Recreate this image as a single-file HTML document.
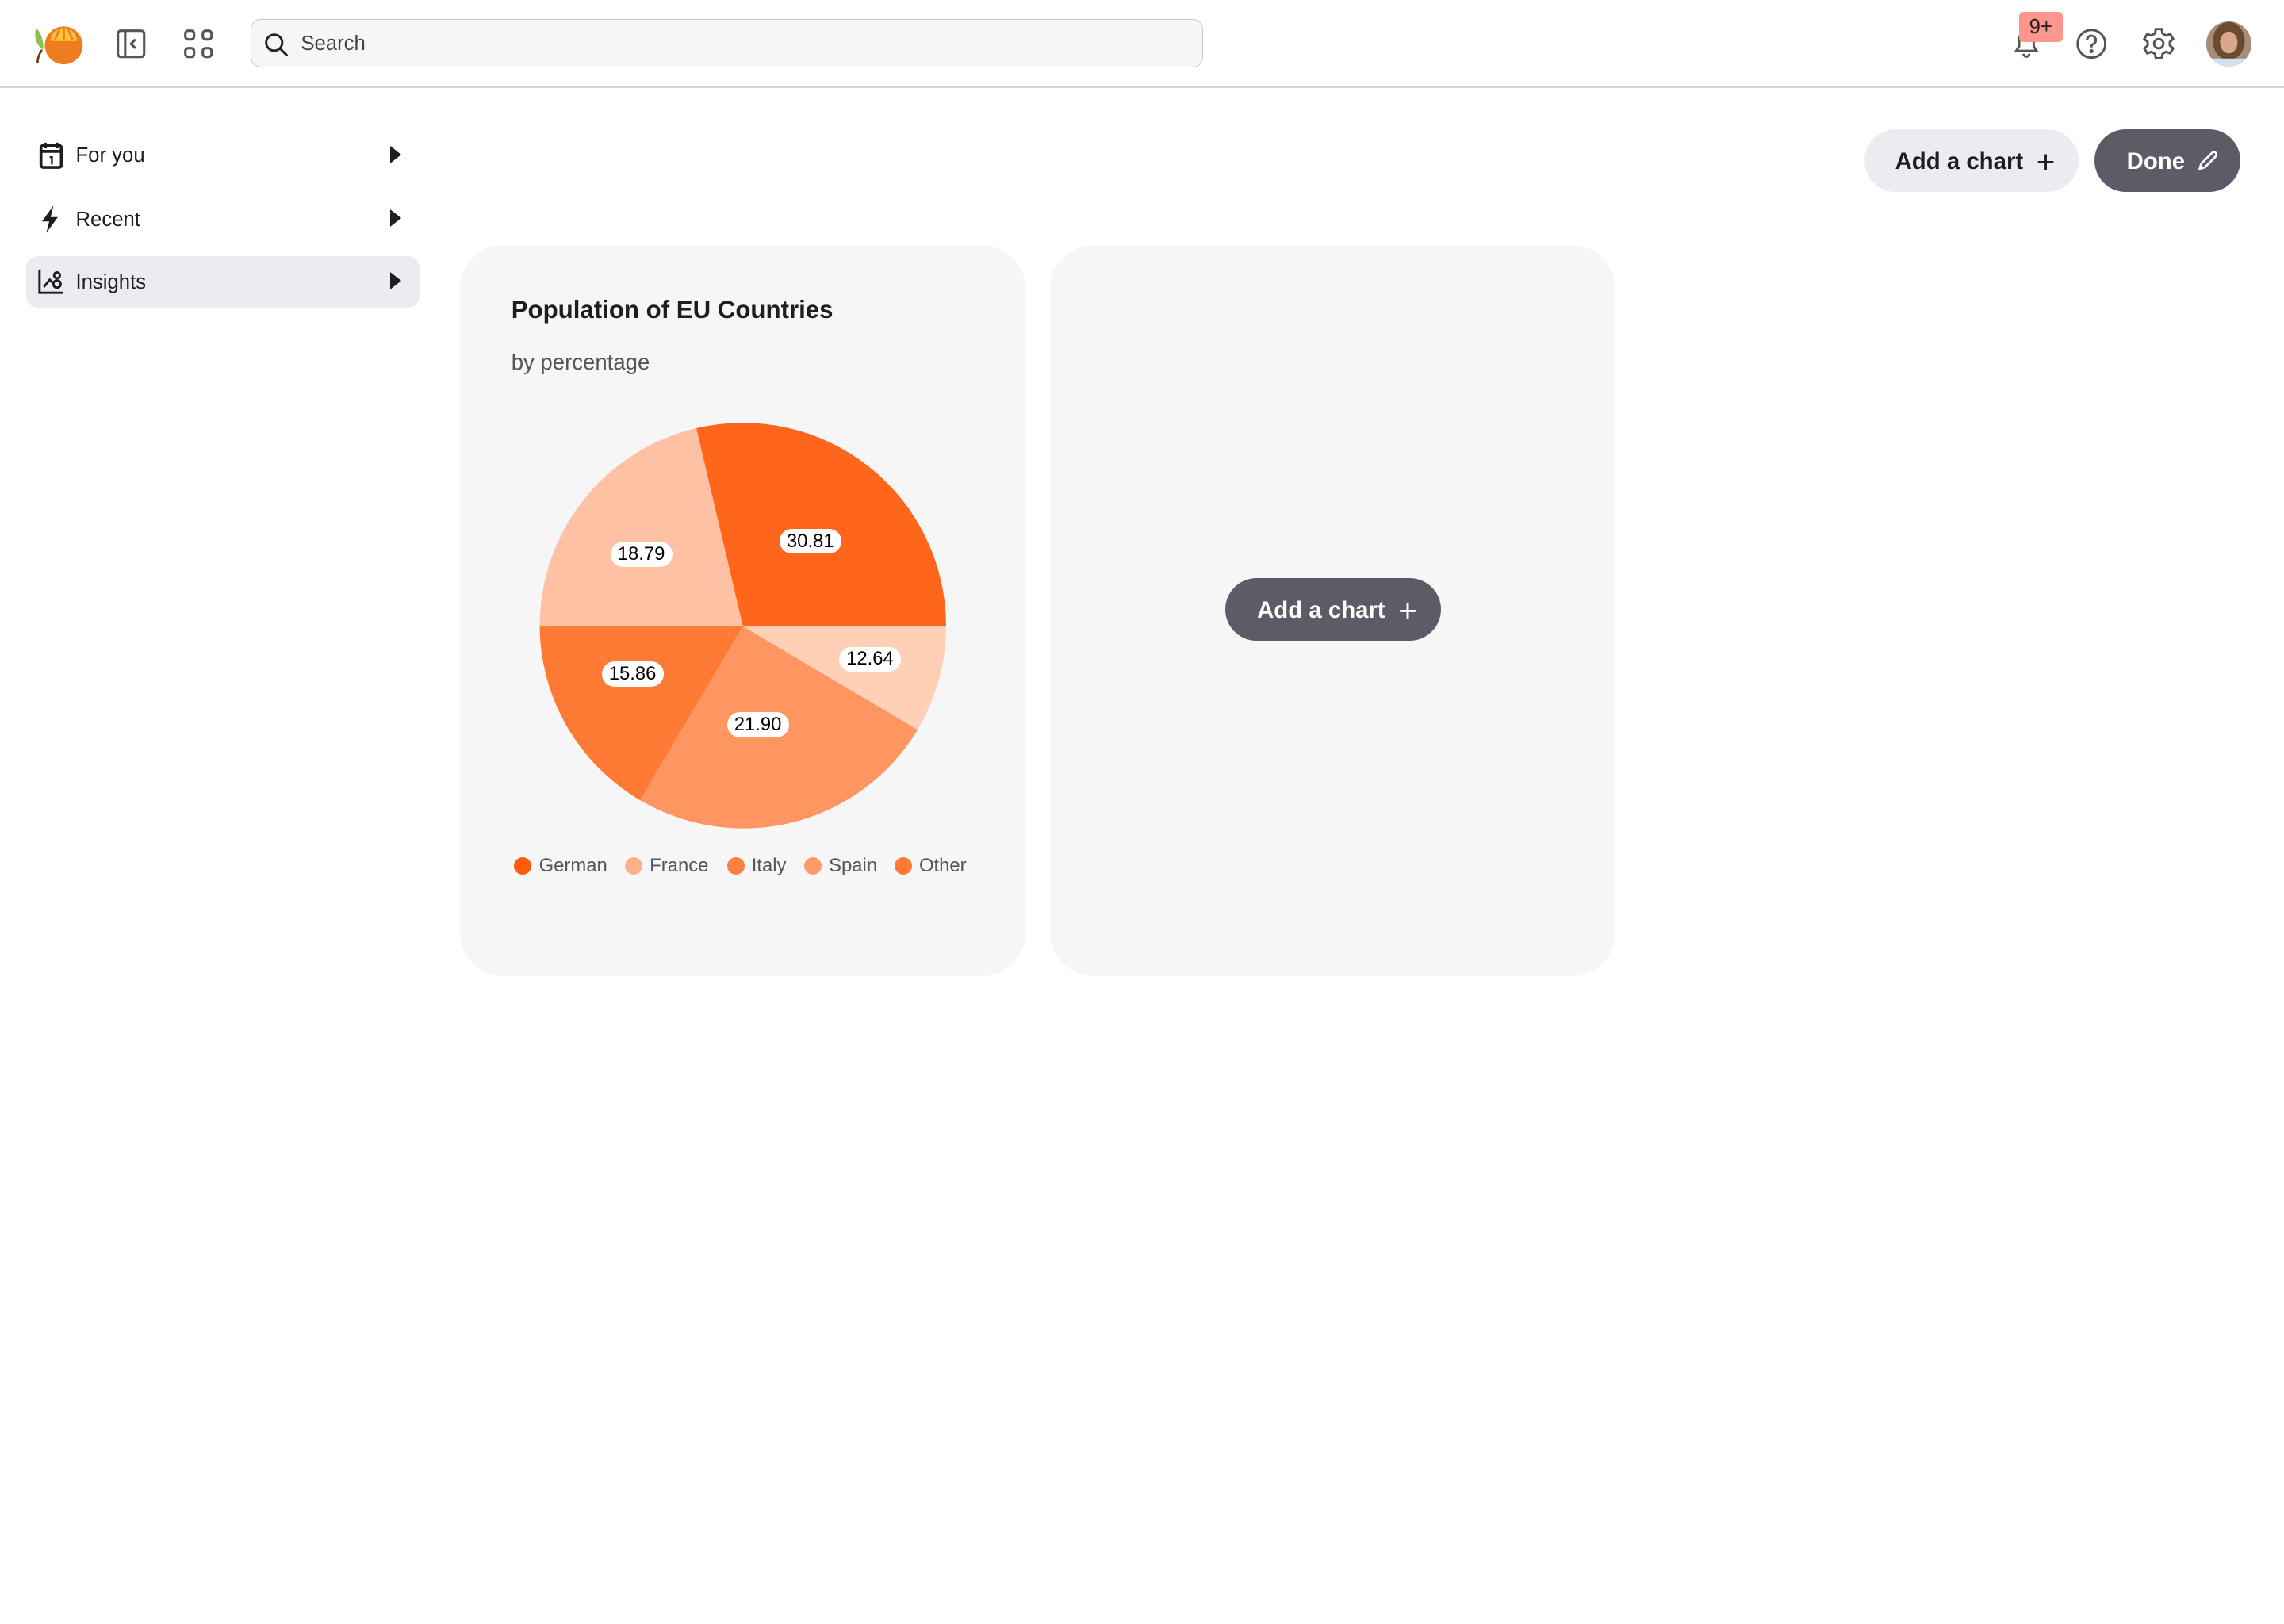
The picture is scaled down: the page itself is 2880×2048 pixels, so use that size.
<!DOCTYPE html>
<html><head><meta charset="utf-8"><style>
html,body{margin:0;padding:0;background:#fff;}
body{width:1568px;height:1115px;zoom:1.83673;position:relative;overflow:hidden;font-family:"Liberation Sans",sans-serif;color:#1d1d22;}
.a{position:absolute;}
.top{left:0;top:0;width:1568px;height:59px;border-bottom:2px solid #d6d6d6;}
.search{left:172px;top:13px;width:653px;height:32px;border:1px solid #c9c9c9;border-radius:7px;background:#f6f6f6;}
.search span{position:absolute;left:34px;top:9px;font-size:14px;color:#444;}
.nav{left:18px;width:270px;height:35px;border-radius:8px;font-size:14px;}
.nav span{position:absolute;left:34px;top:10px;}
.nav .arr{position:absolute;left:250px;top:11px;width:0;height:0;border-left:8px solid #1d1d22;border-top:6px solid transparent;border-bottom:6px solid transparent;}
.btn{height:43px;border-radius:22px;font-weight:bold;font-size:16px;line-height:45px;}
.card{top:168px;width:388px;height:502px;border-radius:30px;background:#f6f6f6;}
.pill{position:absolute;background:#fff;border-radius:9px;font-size:13px;padding:1px 5px;color:#000;}
.leg{position:absolute;top:587px;font-size:13px;color:#555560;}
.leg i{display:inline-block;width:12px;height:12px;border-radius:6px;vertical-align:-2px;margin-right:5px;}
</style></head><body>
<div class="a top"></div>
<svg class="a" style="left:22px;top:14px" width="38" height="32" viewBox="0 0 38 32">
<path d="M3 5 C1 12 4 18 8 20 C8 14 7 9 3 5Z" fill="#8bc34a"/>
<path d="M7 20 C5 23 4 26 4 29" stroke="#6b3e1e" stroke-width="1.5" fill="none"/>
<circle cx="22" cy="17" r="13" fill="#ee7d22"/>
<path d="M13 14 A9 9 0 0 1 31 14Z" fill="#ffc23a"/>
<path d="M16 13 L19 6 M22 13 L22 5 M28 13 L25 6" stroke="#ee7d22" stroke-width="1.5"/>
</svg>
<svg class="a" style="left:79px;top:19px" width="22" height="22" viewBox="0 0 22 22" fill="none" stroke="#555" stroke-width="1.7"><rect x="2" y="2" width="18" height="18" rx="2"/><path d="M7 2v18M14 8l-3 3 3 3"/></svg>
<svg class="a" style="left:125px;top:19px" width="22" height="22" viewBox="0 0 22 22" fill="none" stroke="#555" stroke-width="1.7"><rect x="2" y="2" width="6" height="6" rx="2"/><rect x="14" y="2" width="6" height="6" rx="2"/><rect x="2" y="14" width="6" height="6" rx="2"/><rect x="14" y="14" width="6" height="6" rx="2"/></svg>
<div class="a search"><svg style="position:absolute;left:8px;top:8px" width="18" height="18" viewBox="0 0 18 18" fill="none" stroke="#222" stroke-width="1.6"><circle cx="7.5" cy="7.5" r="5.5"/><path d="M11.5 11.5l5 5"/></svg><span>Search</span></div>
<svg class="a" style="left:1380px;top:17px" width="22" height="24" viewBox="0 0 22 24" fill="none" stroke="#555" stroke-width="1.6"><path d="M4 18h14l-2-3V10a5 5 0 0 0-10 0v5z"/><path d="M9 20a2 2 0 0 0 4 0"/></svg>
<div class="a" style="left:1386px;top:8px;width:30px;height:21px;background:#ff968e;border-radius:3px;font-size:14px;text-align:center;line-height:21px;color:#222">9+</div>
<svg class="a" style="left:1425px;top:19px" width="22" height="22" viewBox="0 0 22 22" fill="none" stroke="#555" stroke-width="1.6"><circle cx="11" cy="11" r="9.5"/><path d="M8 8.5a3 3 0 1 1 4 2.8c-1 .4-1 1-1 2.2"/><circle cx="11" cy="16" r=".6" fill="#555"/></svg>
<svg class="a" style="left:1470px;top:18px" width="24" height="24" viewBox="0 0 24 24" fill="none" stroke="#555" stroke-width="1.6"><path d="M10 2h4l.6 3 2.4 1.4 2.9-1 2 3.4-2.3 2v2.4l2.3 2-2 3.4-2.9-1L14.6 19l-.6 3h-4l-.6-3L7 17.6l-2.9 1-2-3.4 2.3-2v-2.4l-2.3-2 2-3.4 2.9 1L9.4 5z"/><circle cx="12" cy="12" r="3.2"/></svg>
<svg class="a" style="left:1514px;top:14px" width="32" height="32" viewBox="0 0 32 32"><defs><clipPath id="c"><circle cx="16" cy="16" r="15.5"/></clipPath></defs><g clip-path="url(#c)"><rect width="32" height="32" fill="#a88c78"/><ellipse cx="16" cy="14" rx="11" ry="13" fill="#6b4a32"/><ellipse cx="16" cy="15" rx="6" ry="7.5" fill="#d9a78c"/><rect x="4" y="26" width="24" height="8" fill="#cfe1ea"/></g></svg>

<div class="a nav" style="top:89px"><svg style="position:absolute;left:8px;top:8px" width="18" height="19" viewBox="0 0 18 19" fill="none" stroke="#1d1d22" stroke-width="2"><rect x="2" y="3" width="14" height="15" rx="1.5"/><path d="M5 1v4M13 1v4M2 7h14"/><path d="M8 11h1.5v5" stroke-width="1.3"/></svg><span>For you</span><div class="arr"></div></div>
<div class="a nav" style="top:133px"><svg style="position:absolute;left:10px;top:8px" width="14" height="19" viewBox="0 0 14 19"><path d="M9 0L1 11h5l-2 8 8-11H7z" fill="#1d1d22"/></svg><span>Recent</span><div class="arr"></div></div>
<div class="a nav" style="top:176px;background:#ececf0"><svg style="position:absolute;left:8px;top:8px" width="18" height="18" viewBox="0 0 18 18" fill="none" stroke="#1d1d22" stroke-width="1.6"><path d="M1 1v16h16"/><path d="M4 13l4-5 3 3"/><circle cx="13" cy="5" r="2"/><circle cx="13" cy="11" r="2.5"/></svg><span>Insights</span><div class="arr"></div></div>

<div class="a btn" style="left:1280px;top:89px;width:147px;background:#ececf0;color:#1d1d22"><span style="position:absolute;left:21px">Add a chart</span><span style="position:absolute;left:118px;font-size:22px;font-weight:normal">+</span></div>
<div class="a btn" style="left:1438px;top:89px;width:100px;background:#5c5c66;color:#fff"><span style="position:absolute;left:22px">Done</span><svg style="position:absolute;left:70px;top:14px" width="15" height="15" viewBox="0 0 15 15" fill="none" stroke="#fff" stroke-width="1.5"><path d="M2 13l1-3.5L10.5 2a1.5 1.5 0 0 1 2.5 2.5L5.5 12z"/></svg></div>

<div class="a card" style="left:316px">
<div class="a" style="left:35px;top:35px;font-size:17px;font-weight:bold">Population of EU Countries</div>
<div class="a" style="left:35px;top:72px;font-size:15px;color:#555">by percentage</div>
</div>
<svg class="a" style="left:0;top:0" width="1568" height="700">
<path d="M510 430 L649.5 430 A139.5 139.5 0 0 0 478 294 Z" fill="#ff661c"/>
<path d="M510 430 L478 294 A139.5 139.5 0 0 0 370.5 430 Z" fill="#fec1a3"/>
<path d="M510 430 L370.5 430 A139.5 139.5 0 0 0 439.5 549.4 Z" fill="#ff7a35"/>
<path d="M510 430 L439.5 549.4 A139.5 139.5 0 0 0 630 501 Z" fill="#ff9560"/>
<path d="M510 430 L630 501 A139.5 139.5 0 0 0 649.5 430 Z" fill="#ffcfb6"/>
</svg>
<div class="pill" style="left:535px;top:363px">30.81</div>
<div class="pill" style="left:419px;top:372px">18.79</div>
<div class="pill" style="left:576px;top:444px">12.64</div>
<div class="pill" style="left:413px;top:454px">15.86</div>
<div class="pill" style="left:499px;top:489px">21.90</div>
<div class="leg" style="left:353px"><i style="background:#ff5a0a"></i>German</div>
<div class="leg" style="left:429px"><i style="background:#fdb08c"></i>France</div>
<div class="leg" style="left:499px"><i style="background:#ff8142"></i>Italy</div>
<div class="leg" style="left:552px"><i style="background:#ff9b68"></i>Spain</div>
<div class="leg" style="left:614px"><i style="background:#ff7a32"></i>Other</div>

<div class="a card" style="left:721px"></div>
<div class="a btn" style="left:841px;top:397px;width:148px;background:#5c5c66;color:#fff"><span style="position:absolute;left:22px">Add a chart</span><span style="position:absolute;left:119px;font-size:22px;font-weight:normal">+</span></div>
</body></html>
